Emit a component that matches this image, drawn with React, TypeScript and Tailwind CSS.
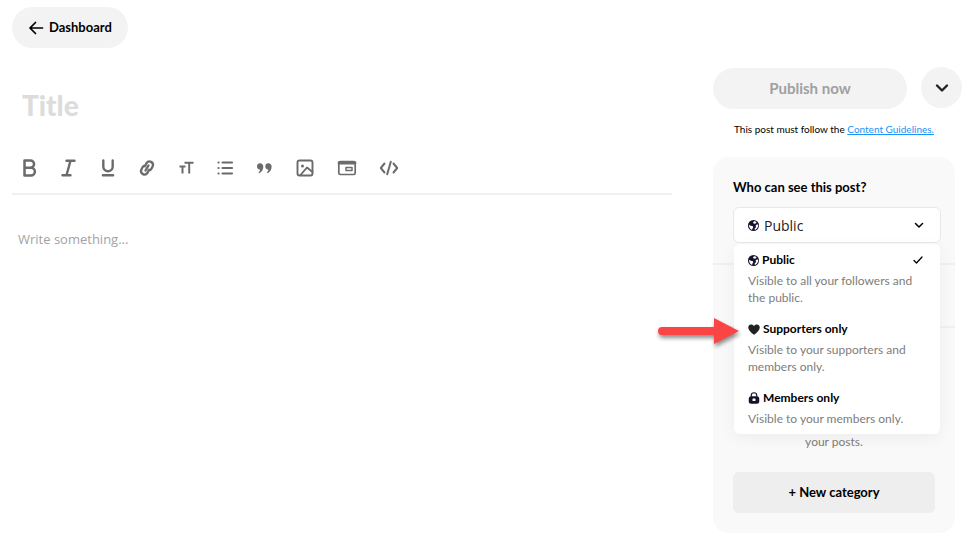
import React, { useState } from "react";

const stroke = {
  fill: "none",
  stroke: "currentColor",
  strokeLinecap: "round" as const,
  strokeLinejoin: "round" as const,
};

function Globe({ className }: { className: string }) {
  return (
    <svg viewBox="0 0 20 20" className={className} aria-hidden="true">
      <circle cx="10" cy="10" r="10" fill="#15132b" />
      <path
        d="M10.500 2.500C13 2 15 3.500 15.500 5L13 7 10.500 6.500 9 5ZM2 8.500L5 10.500 9 11.500 9.500 13.500 8 15.500 7.500 18C4 17 1.500 13 2 8.500ZM16.500 7.500L18.500 9C18.800 13 16 17 12.500 18L12 15.500 14.500 13 14 10Z"
        fill="#fff"
      />
    </svg>
  );
}

function Heart({ className }: { className: string }) {
  return (
    <svg viewBox="0 0 24 22" className={className} aria-hidden="true">
      <path
        d="M12 21.500C5 16 .5 12 .5 6.800.5 3.200 3.200.8 6.300.8 8.700.8 10.900 2 12 4 13.100 2 15.300.8 17.700.8c3.100 0 5.800 2.400 5.800 6C23.500 12 19 16 12 21.500Z"
        fill="#222"
      />
    </svg>
  );
}

function Lock({ className }: { className: string }) {
  return (
    <svg viewBox="0 0 24 24" className={className} aria-hidden="true">
      <path d="M6.500 10V7a5.500 5.500 0 0 1 11 0v3" fill="none" stroke="#15132b" strokeWidth="2.200" />
      <rect x="1.500" y="8.500" width="21" height="15" rx="5" fill="#15132b" />
      <rect x="9" y="13" width="6" height="5" rx="1" fill="#fff" />
    </svg>
  );
}

const textTools: { name: string; icon: React.ReactNode }[] = [
  {
    name: "Bold",
    icon: <path d="M4.500 2.500h6a3.600 3.600 0 0 1 0 7.200h-6zM4.500 9.700H11a3.900 3.900 0 0 1 0 7.800H4.500z" strokeWidth="2.500" />,
  },
  { name: "Italic", icon: <path d="M7.500 2.800h8M3.500 17.200h8M11.500 2.800l-4 14.400" strokeWidth="2.400" /> },
  { name: "Underline", icon: <path d="M5.300 2.500v6a4.700 4.700 0 0 0 9.400 0v-6M4.900 17.300h10.200" strokeWidth="2.400" /> },
  {
    name: "Link",
    icon: (
      <path
        d="M8 8.200l1.600-3.200a3.500 3.500 0 0 1 6.200 3.100l-1.200 2.400a3.500 3.500 0 0 1-2.400 1.900M12 11.800l-1.600 3.200a3.500 3.500 0 0 1-6.200-3.100l1.200-2.400a3.500 3.500 0 0 1 2.400-1.900M11.500 7.500l-3 5"
        strokeWidth="2.300"
      />
    ),
  },
  {
    name: "Text size",
    icon: <path d="M8.500 4.700h9M13.200 4.700v10.800M3.500 8.500h6M6.500 8.500v7" strokeWidth="2" strokeLinecap="butt" />,
  },
  {
    name: "Bulleted list",
    icon: <path d="M7.500 4.500h9.500M7.500 10h9.500M7.500 15.500h9.500M3.500 4.500h.1M3.500 10h.1M3.500 15.500h.1" strokeWidth="2.200" />,
  },
  {
    name: "Quote",
    icon: (
      <path
        d="M6.200 5.300a3 3 0 0 0-.3 6.100c.2 1.400-.5 2.200-1.400 2.900l.8 1c2.600-1.300 4-3.700 4-6.700 0-2-1.300-3.300-3.100-3.300zM14.500 5.300a3 3 0 0 0-.3 6.100c.2 1.400-.5 2.200-1.400 2.900l.8 1c2.600-1.300 4-3.700 4-6.700 0-2-1.300-3.300-3.100-3.300z"
        fill="currentColor"
        stroke="none"
      />
    ),
  },
];

const insertTools: { name: string; icon: React.ReactNode }[] = [
  {
    name: "Image",
    icon: (
      <>
        <rect x="2.500" y="2.500" width="15" height="15" rx="2" strokeWidth="1.900" />
        <circle cx="7.500" cy="8" r="1.500" fill="currentColor" stroke="none" />
        <path d="M5.500 17l6.500-7.500 5.500 4.500" strokeWidth="1.900" />
      </>
    ),
  },
  {
    name: "Embed",
    icon: (
      <>
        <rect x="1.800" y="3.500" width="16.400" height="13" rx="1.500" strokeWidth="1.700" />
        <path d="M2 5h16" strokeWidth="2.800" />
        <rect x="9" y="9.500" width="6" height="3" strokeWidth="1.500" />
      </>
    ),
  },
  { name: "Code", icon: <path d="M5.500 5.500L1.800 10l3.700 4.500M14.500 5.500l3.700 4.500-3.700 4.500M11.800 3.800L8.200 16.200" strokeWidth="2" /> },
];

const audiences = [
  { id: "public", label: "Public", text: "Visible to all your followers and the public.", icon: <Globe className="size-[11px]" /> },
  { id: "supporters", label: "Supporters only", text: "Visible to your supporters and members only.", icon: <Heart className="h-[11px] w-3" /> },
  { id: "members", label: "Members only", text: "Visible to your members only.", icon: <Lock className="size-3" /> },
];

function Arrow() {
  return (
    <svg
      viewBox="0 0 88 36"
      className="pointer-events-none absolute -left-[92px] -top-[3px] h-9 w-[88px] drop-shadow-[1px_3px_2px_rgba(0,0,0,0.45)]"
      aria-hidden="true"
    >
      <path d="M6 11H58V2L83 15 58 28V19H6a4 4 0 0 1 0-8Z" fill="#fb4444" />
    </svg>
  );
}

export default function App() {
  const [audience, setAudience] = useState("public");
  return (
    <div className="bg-white pl-3 pr-[11px] pt-[7px] font-['Lato',sans-serif] text-black">
      <header>
        <a href="#dashboard" className="inline-flex h-[41px] items-center gap-[5px] rounded-full bg-[#f3f3f3] px-4 text-[13px] font-bold">
          <svg viewBox="0 0 16 16" className="size-4" {...stroke} strokeWidth="1.700" aria-hidden="true">
            <path d="M7.500 2.500L2 8l5.500 5.500M2 8h12.500" />
          </svg>
          Dashboard
        </a>
      </header>

      <div className="flex gap-[41px]">
        <main className="min-w-0 flex-1 pt-9">
          <input
            aria-label="Title"
            placeholder="Title"
            className="block h-[42px] w-full px-[10px] text-[28px] font-black outline-none placeholder:text-[#dcdcdc]"
          />
          <div role="toolbar" aria-label="Formatting" className="mt-7 flex gap-[19px] border-b-2 border-[#f1f1f1] px-2 pb-[15px] pt-1 text-[#6b6b6b]">
            {textTools.map((t) => (
              <button key={t.name} type="button" aria-label={t.name} className="size-5">
                <svg viewBox="0 0 20 20" className="size-5" {...stroke} aria-hidden="true">
                  {t.icon}
                </svg>
              </button>
            ))}
            {insertTools.map((t) => (
              <button key={t.name} type="button" aria-label={t.name} className="grid h-5 w-[23px] place-items-center">
                <svg viewBox="0 0 20 20" className="size-5" {...stroke} aria-hidden="true">
                  {t.icon}
                </svg>
              </button>
            ))}
          </div>
          <textarea
            aria-label="Post body"
            placeholder="Write something..."
            className="mt-8 block h-60 w-full resize-none px-[6px] font-['Open_Sans',sans-serif] text-[13px] leading-6 outline-none placeholder:text-[#a3a3a3]"
          />
        </main>

        <aside className="w-[249px] shrink-0 pt-[19px]">
          <div className="flex items-start justify-between">
            <button type="button" className="mt-px h-[41px] w-[194px] rounded-full bg-[#f3f3f3] text-[15px] font-bold text-[#a0a0a0]">
              Publish now
            </button>
            <button type="button" aria-label="More options" className="grid size-[41px] place-items-center rounded-full bg-[#f3f3f3] text-[#222]">
              <svg viewBox="0 0 16 16" className="size-4" {...stroke} strokeWidth="2.400" aria-hidden="true">
                <path d="M3 5.500l5 5 5-5" />
              </svg>
            </button>
          </div>
          <p className="mt-3 w-[242px] text-center text-[10px] leading-4">
            This post must follow the{" "}
            <a href="#guidelines" className="text-[#1a94f5] underline">
              Content Guidelines.
            </a>
          </p>

          <div className="mt-5 w-[242px] rounded-2xl bg-[#f9f9f9] pb-5">
            <section className="h-[108px] border-b-2 border-[#f0f0f3] pl-5 pr-[14px] pt-5">
              <label htmlFor="audience" className="block text-[13px] font-bold leading-5">
                Who can see this post?
              </label>
              <div className="relative mt-[10px]">
                <select
                  id="audience"
                  value={audience}
                  onChange={(e) => setAudience(e.target.value)}
                  className="block h-9 w-full appearance-none rounded-md border border-[#e8e8e8] bg-white pl-[30px] font-['Open_Sans',sans-serif] text-[14px] text-[#222] outline-none"
                >
                  {audiences.map((a) => (
                    <option key={a.id} value={a.id}>
                      {a.label}
                    </option>
                  ))}
                </select>
                <Globe className="pointer-events-none absolute left-[15px] top-[13px] size-[11px]" />
                <svg viewBox="0 0 12 12" className="pointer-events-none absolute right-4 top-3 size-3" {...stroke} strokeWidth="1.500" aria-hidden="true">
                  <path d="M2.500 4.500L6 8l3.500-3.500" />
                </svg>
                <ul className="absolute inset-x-px top-[37px] flex flex-col gap-[13px] rounded-md bg-white px-[14px] pb-[7px] pt-[6px] shadow-[0_4px_16px_rgba(0,0,0,0.05)]">
                  {audiences.map((a) => (
                    <li key={a.id} className="relative">
                      {a.id === "supporters" && <Arrow />}
                      <button type="button" onClick={() => setAudience(a.id)} className="block w-full text-left">
                        <span className="flex items-center gap-[3px] text-[12px] font-bold leading-5">
                          {a.icon}
                          {a.label}
                          {a.id === audience && (
                            <svg viewBox="0 0 12 12" className="ml-auto mr-[2px] size-3" {...stroke} strokeWidth="1.300" aria-label="Selected">
                              <path d="M2 6.500l2.500 2.500 5.500-6" />
                            </svg>
                          )}
                        </span>
                        <span className="mt-[2px] block text-[12px] leading-[17px] text-[#7d7d7d]">{a.text}</span>
                      </button>
                    </li>
                  ))}
                </ul>
              </div>
            </section>
            <section className="h-[63px] border-b-2 border-[#f0f0f3]" />
            <section className="px-5 pt-[104px]">
              <p className="text-center text-[12px] leading-5 text-[#7d7d7d]">your posts.</p>
              <button type="button" className="mt-5 block h-[41px] w-full rounded-md bg-[#eeeeee] text-[13px] font-bold">
                + New category
              </button>
            </section>
          </div>
        </aside>
      </div>
    </div>
  );
}
